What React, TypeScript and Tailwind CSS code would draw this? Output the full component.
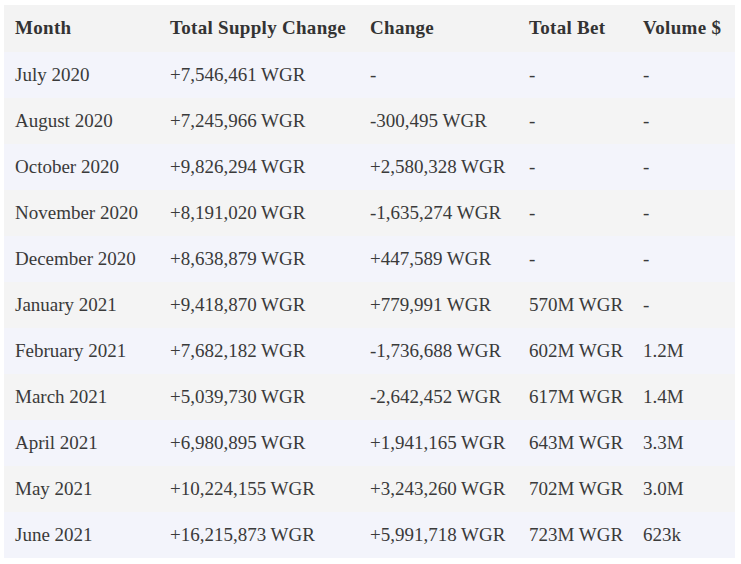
type Row = {
  month: string;
  supply: string;
  change: string;
  bet: string;
  volume: string;
};

const rows: Row[] = [
  { month: 'July 2020', supply: '+7,546,461 WGR', change: '-', bet: '-', volume: '-' },
  { month: 'August 2020', supply: '+7,245,966 WGR', change: '-300,495 WGR', bet: '-', volume: '-' },
  { month: 'October 2020', supply: '+9,826,294 WGR', change: '+2,580,328 WGR', bet: '-', volume: '-' },
  { month: 'November 2020', supply: '+8,191,020 WGR', change: '-1,635,274 WGR', bet: '-', volume: '-' },
  { month: 'December 2020', supply: '+8,638,879 WGR', change: '+447,589 WGR', bet: '-', volume: '-' },
  { month: 'January 2021', supply: '+9,418,870 WGR', change: '+779,991 WGR', bet: '570M WGR', volume: '-' },
  { month: 'February 2021', supply: '+7,682,182 WGR', change: '-1,736,688 WGR', bet: '602M WGR', volume: '1.2M' },
  { month: 'March 2021', supply: '+5,039,730 WGR', change: '-2,642,452 WGR', bet: '617M WGR', volume: '1.4M' },
  { month: 'April 2021', supply: '+6,980,895 WGR', change: '+1,941,165 WGR', bet: '643M WGR', volume: '3.3M' },
  { month: 'May 2021', supply: '+10,224,155 WGR', change: '+3,243,260 WGR', bet: '702M WGR', volume: '3.0M' },
  { month: 'June 2021', supply: '+16,215,873 WGR', change: '+5,991,718 WGR', bet: '723M WGR', volume: '623k' },
];

const headers = ['Month', 'Total Supply Change', 'Change', 'Total Bet', 'Volume $'];

export default function App() {
  return (
    <div className="min-h-[564px] bg-white pl-[4px] pt-[5px] font-['Liberation_Serif',serif]">
      <table className="w-[731px] table-fixed border-collapse text-left text-[19px] text-[#3a3a3a]">
        <colgroup>
          <col className="w-[155px]" />
          <col className="w-[200px]" />
          <col className="w-[159px]" />
          <col className="w-[114px]" />
          <col className="w-[103px]" />
        </colgroup>
        <thead>
          <tr className="h-[47px] bg-[#f3f3f3]">
            {headers.map(h => (
              <th key={h} className="whitespace-nowrap px-[11px] font-bold tracking-[0.3px] text-[#333]">
                {h}
              </th>
            ))}
          </tr>
        </thead>
        <tbody>
          {rows.map((r, i) => (
            <tr key={r.month} className={`h-[46px] ${i % 2 === 0 ? 'bg-[#f3f4fb]' : 'bg-[#f4f4f4]'}`}>
              <td className="whitespace-nowrap px-[11px]">{r.month}</td>
              <td className="whitespace-nowrap px-[11px]">{r.supply}</td>
              <td className="whitespace-nowrap px-[11px]">{r.change}</td>
              <td className="whitespace-nowrap px-[11px]">{r.bet}</td>
              <td className="whitespace-nowrap px-[11px]">{r.volume}</td>
            </tr>
          ))}
        </tbody>
      </table>
    </div>
  );
}
